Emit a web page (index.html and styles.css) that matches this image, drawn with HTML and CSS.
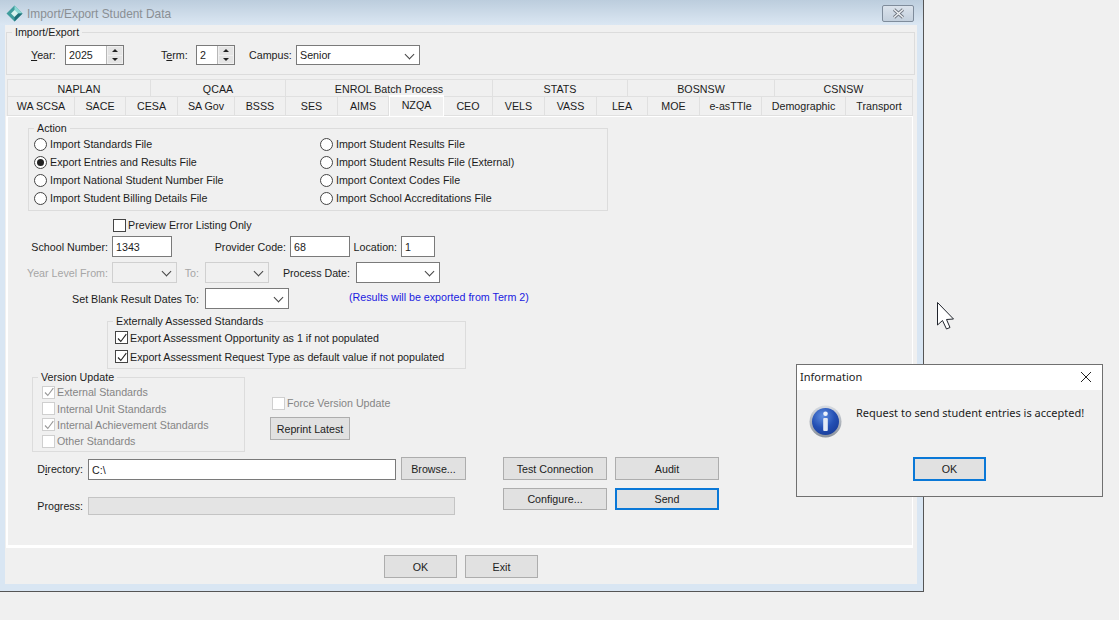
FILE: index.html
```html
<!DOCTYPE html>
<html lang="en">
    <head>
        <meta charset="UTF-8" />
        <title>Import/Export Student Data</title>
        <link rel="stylesheet" href="styles.css">
    </head>
    <body>
        <!-- shared icons -->
        <svg class="defs" width="0" height="0">
            <symbol id="tick" viewBox="0 0 12 12">
                <path d="M2 6.5 L4.8 9.5 L10.3 2.2" fill="none" stroke="currentColor" stroke-width="1.1" />
            </symbol>
            <radialGradient id="infoFill" cx="40%" cy="30%" r="80%">
                <stop offset="0" stop-color="#5f8ee0" />
                <stop offset="0.55" stop-color="#2450b4" />
                <stop offset="1" stop-color="#173a96" />
            </radialGradient>
            <linearGradient id="infoRing" x1="0" y1="0" x2="0" y2="1">
                <stop offset="0" stop-color="#d8dce2" />
                <stop offset="1" stop-color="#8b929c" />
            </linearGradient>
        </svg>

        <!-- main window -->
        <div class="win">
            <div class="titlebar">
                <svg class="appicon" width="17" height="17" viewBox="0 0 17 17">
                    <path d="M8.5 .5 L16.5 8.5 L8.5 16.5 L.5 8.5 Z" fill="#3f9d9d" />
                    <path d="M8.5 .5 L16.5 8.5 L8.5 8.5 Z" fill="#8fd8d4" />
                    <path d="M8.5 8.5 L16.5 8.5 L8.5 16.5 Z" fill="#1f6f78" />
                    <path d="M8.5 5 L12 8.5 L8.5 12 L5 8.5 Z" fill="#d8f2ee" />
                </svg>
                <span class="wintitle">Import/Export Student Data</span>
                <button class="winclose">
                    <svg width="13" height="11" viewBox="0 0 13 11">
                        <path d="M2 1.5 L11 9.5 M11 1.5 L2 9.5" stroke="#6f7680" stroke-width="3.2" />
                        <path d="M2 1.5 L11 9.5 M11 1.5 L2 9.5" stroke="#eef1f4" stroke-width="1.5" />
                    </svg>
                </button>
            </div>

            <div class="client">
                <fieldset class="grp grp-top">
                    <legend>Import/Export</legend>
                    <div class="top-row">
                        <label class="lbl-year"><u>Y</u>ear:</label>
                        <div class="spin spin-year">
                            <span class="spin-val">2025</span>
                            <span class="spin-btns"><i class="up"></i><i class="down"></i></span>
                        </div>
                        <label class="lbl-term">T<u>e</u>rm:</label>
                        <div class="spin spin-term">
                            <span class="spin-val">2</span>
                            <span class="spin-btns"><i class="up"></i><i class="down"></i></span>
                        </div>
                        <label class="lbl-campus">Campus:</label>
                        <div class="combo w-campus">Senior</div>
                    </div>
                </fieldset>

                <!-- tabs -->
                <div class="tabs tabs-top">
                    <div class="tab">NAPLAN</div>
                    <div class="tab">QCAA</div>
                    <div class="tab">ENROL Batch Process</div>
                    <div class="tab">STATS</div>
                    <div class="tab">BOSNSW</div>
                    <div class="tab">CSNSW</div>
                </div>
                <div class="tabs tabs-low">
                    <div class="tab">WA SCSA</div>
                    <div class="tab">SACE</div>
                    <div class="tab">CESA</div>
                    <div class="tab">SA Gov</div>
                    <div class="tab">BSSS</div>
                    <div class="tab">SES</div>
                    <div class="tab">AIMS</div>
                    <div class="tab tab-on">NZQA</div>
                    <div class="tab">CEO</div>
                    <div class="tab">VELS</div>
                    <div class="tab">VASS</div>
                    <div class="tab">LEA</div>
                    <div class="tab">MOE</div>
                    <div class="tab">e-asTTle</div>
                    <div class="tab">Demographic</div>
                    <div class="tab">Transport</div>
                </div>

                <div class="panel">
                    <fieldset class="grp grp-action">
                        <legend>Action</legend>
                        <div class="radios">
                            <div class="opt"><span class="radio"></span>Import Standards File</div>
                            <div class="opt"><span class="radio"></span>Import Student Results File</div>
                            <div class="opt"><span class="radio on"></span>Export Entries and Results File</div>
                            <div class="opt"><span class="radio"></span>Import Student Results File (External)</div>
                            <div class="opt"><span class="radio"></span>Import National Student Number File</div>
                            <div class="opt"><span class="radio"></span>Import Context Codes File</div>
                            <div class="opt"><span class="radio"></span>Import Student Billing Details File</div>
                            <div class="opt"><span class="radio"></span>Import School Accreditations File</div>
                        </div>
                    </fieldset>

                    <div class="opt preview"><span class="check"></span>Preview Error Listing Only</div>

                    <div class="row row-school">
                        <label class="lbl lbl-main">School Number:</label>
                        <div class="edit w-school">1343</div>
                        <label class="lbl lbl-provider">Provider Code:</label>
                        <div class="edit w-school">68</div>
                        <label class="lbl lbl-location">Location:</label>
                        <div class="edit w-location">1</div>
                    </div>
                    <div class="row">
                        <label class="lbl lbl-main off">Year Level From:</label>
                        <div class="combo combo-off w-from"></div>
                        <label class="lbl lbl-to off">To:</label>
                        <div class="combo combo-off w-to"></div>
                        <label class="lbl lbl-process">Process Date:</label>
                        <div class="combo w-date"></div>
                    </div>
                    <div class="row">
                        <label class="lbl lbl-blank">Set Blank Result Dates To:</label>
                        <div class="combo w-date"></div>
                        <span class="note">(Results will be exported from Term 2)</span>
                    </div>

                    <fieldset class="grp grp-ext">
                        <legend>Externally Assessed Standards</legend>
                        <div class="opt opt-ext"><span class="check"><svg width="12" height="12"><use href="#tick" /></svg></span>Export Assessment Opportunity as 1 if not populated</div>
                        <div class="opt opt-ext"><span class="check"><svg width="12" height="12"><use href="#tick" /></svg></span>Export Assessment Request Type as default value if not populated</div>
                    </fieldset>

                    <div class="version-row">
                        <fieldset class="grp grp-version">
                            <legend>Version Update</legend>
                            <div class="opt opt-off"><span class="check"><svg width="12" height="12"><use href="#tick" /></svg></span>External Standards</div>
                            <div class="opt opt-off"><span class="check"></span>Internal Unit Standards</div>
                            <div class="opt opt-off"><span class="check"><svg width="12" height="12"><use href="#tick" /></svg></span>Internal Achievement Standards</div>
                            <div class="opt opt-off"><span class="check"></span>Other Standards</div>
                        </fieldset>
                        <div class="force">
                            <div class="opt opt-off opt-force"><span class="check"></span>Force Version Update</div>
                            <button class="btn btn-reprint">Reprint Latest</button>
                        </div>
                    </div>

                    <div class="lower">
                        <div class="lower-left">
                            <div class="dir-row">
                                <label class="lbl lbl-dir">D<u>i</u>rectory:</label>
                                <div class="edit w-dir">C:\</div>
                                <button class="btn btn-browse">Browse...</button>
                            </div>
                            <div class="progress-row">
                                <label class="lbl lbl-dir">Progress:</label>
                                <div class="progress"></div>
                            </div>
                        </div>
                        <div class="actions">
                            <button class="btn btn-tall">Test Connection</button>
                            <button class="btn btn-tall">Audit</button>
                            <button class="btn">Configure...</button>
                            <button class="btn btn-focus">Send</button>
                        </div>
                    </div>
                </div>

                <div class="footer">
                    <button class="btn btn-foot">OK</button>
                    <button class="btn btn-foot">Exit</button>
                </div>
            </div>
        </div>

        <!-- mouse pointer -->
        <svg class="pointer" width="20" height="30" viewBox="0 0 20 30">
            <path d="M1.5 1.5 L1.5 24 L6.5 19.5 L10.5 28 L14 26.5 L10.5 18.5 L17.5 18 Z" fill="#fff" stroke="#20242c" stroke-width="1" />
        </svg>

        <!-- message box -->
        <div class="dlg">
            <div class="dlg-title">
                <span>Information</span>
                <svg width="12" height="12" viewBox="0 0 12 12">
                    <path d="M1 1 L11 11 M11 1 L1 11" stroke="#222" stroke-width="1" />
                </svg>
            </div>
            <div class="dlg-body">
                <div class="dlg-msg">
                    <svg width="33" height="33" viewBox="0 0 33 33">
                        <circle cx="16.5" cy="16.5" r="16" fill="url(#infoRing)" />
                        <circle cx="16.5" cy="16.5" r="13.5" fill="url(#infoFill)" />
                        <circle cx="16.5" cy="8.8" r="2.3" fill="#eef3fb" />
                        <rect x="14.2" y="13" width="4.6" height="13" rx="1" fill="#e4eaf5" />
                    </svg>
                    <p>Request to send student entries is accepted!</p>
                </div>
                <button class="btn btn-focus btn-dlg">OK</button>
            </div>
        </div>
    </body>
</html>
```

FILE: styles.css
```css
* {
    box-sizing: border-box;
}
html,
body {
    margin: 0;
    height: 100%;
}
body {
    position: relative;
    overflow: hidden;
    background: #f0f0f0;
    color: #1c1c1c;
    font-family: "Liberation Sans", "Noto Sans", sans-serif;
    font-size: 10.7px;
    line-height: 14px;
}
.defs {
    position: absolute;
}
button {
    font: inherit;
    color: inherit;
    padding: 0;
}
p {
    margin: 0;
}

/* main window */
.win {
    position: absolute;
    top: 0;
    left: 0;
    width: 924px;
    height: 592px;
    display: flex;
    flex-direction: column;
    padding: 0 6px 7px 5px;
    background: #d9e6f3;
    border-right: 1px solid #555;
    border-bottom: 1px solid #555;
}
.titlebar {
    flex: none;
    height: 25px;
    margin: 0 -6px 0 -5px;
    display: flex;
    align-items: center;
    padding: 2px 9px 0 6px;
    background: linear-gradient(to bottom, #bccddd, #dbe7f3);
}
.appicon {
    margin-right: 4px;
}
.wintitle {
    flex: 1;
    color: #8a8f94;
    font-size: 11.9px;
}
.winclose {
    width: 32px;
    height: 17px;
    display: flex;
    align-items: center;
    justify-content: center;
    background: linear-gradient(to bottom, #dbe3ec, #c4d0dd);
    border: 1px solid #7f8c9b;
    border-radius: 2px;
}
.client {
    flex: 1;
    min-height: 0;
    display: flex;
    flex-direction: column;
    padding: 0 1px;
    background: #f0f0f0;
}

/* group boxes */
.grp {
    margin: 0;
    padding: 0;
    min-width: 0;
    border: 1px solid #dcdcdc;
}
.grp legend {
    padding: 0 3px;
    margin-left: 5px;
    line-height: 14px;
}
.grp-top {
    width: 909px;
    height: 50px;
}
.top-row {
    display: flex;
    align-items: center;
    height: 20px;
    margin-top: 6px;
}
.lbl-year {
    margin-left: 24px;
    width: 34px;
}
.lbl-term {
    margin-left: 37px;
    width: 35px;
}
.lbl-campus {
    margin-left: 14px;
    width: 47px;
}

/* inputs */
.edit,
.combo,
.spin {
    height: 21px;
    display: flex;
    align-items: center;
    padding-left: 3px;
    background: #fff;
    border: 1px solid #7a7a7a;
}
.top-row .spin,
.top-row .combo {
    height: 20px;
}
.spin-year {
    width: 59px;
}
.spin-term {
    width: 39px;
}
.spin-val {
    flex: 1;
}
.spin-btns {
    width: 17px;
    height: 100%;
    display: flex;
    flex-direction: column;
    padding: 1px;
    background: #f0f0f0;
    border-left: 1px solid #b8b8b8;
}
.spin-btns i {
    flex: 1;
    display: flex;
    align-items: center;
    justify-content: center;
    background: #e4e4e4;
}
.spin-btns i::after {
    content: "";
    border-left: 3px solid transparent;
    border-right: 3px solid transparent;
}
.spin-btns .up {
    margin-bottom: 1px;
}
.spin-btns .up::after {
    border-bottom: 3px solid #222;
}
.spin-btns .down::after {
    border-top: 3px solid #222;
}
.combo {
    position: relative;
}
.combo::after {
    content: "";
    position: absolute;
    right: 6px;
    top: 5px;
    width: 6px;
    height: 6px;
    border-right: 1px solid #444;
    border-bottom: 1px solid #444;
    transform: rotate(45deg);
}
.combo-off {
    background: #f0f0f0;
    border-color: #d0d0d0;
}
.w-campus {
    width: 124px;
}
.w-from {
    width: 65px;
}
.w-to {
    width: 64px;
}
.w-date {
    width: 84px;
}
.w-school {
    width: 60px;
}
.w-location {
    width: 34px;
}
.w-dir {
    width: 308px;
    margin-top: 2px;
}

/* tabs */
.tabs {
    display: grid;
    margin-left: 1px;
    width: 906px;
    text-align: center;
}
.tabs-top {
    margin-top: 4px;
    height: 18px;
    grid-template-columns: 144px 135px 207px 135px 147px 138px;
}
.tabs-low {
    height: 18px;
    margin-bottom: 1px;
    grid-template-columns: 68px 51px 52px 57px 51px 52px 51px 55px 49px 52px 52px 51px 52px 62px 84px 67px;
}
.tab {
    display: flex;
    align-items: center;
    justify-content: center;
    padding-top: 1px;
    border: 1px solid #e0e0e0;
    border-left-width: 0;
}
.tab:first-child {
    border-left-width: 1px;
}
.tabs-low .tab {
    padding-top: 0;
    border-top-width: 0;
}
.tabs-low .tab-on {
    position: relative;
    height: 21px;
    margin-top: -2px;
    padding: 0 0 3px;
    background: #f0f0f0;
    border: 1px solid #fff;
    border-top-width: 2px;
    border-bottom: 0;
}

/* tab page */
.panel {
    flex: 1;
    min-height: 0;
    width: 907px;
    border: 1px solid #fff;
    border-left-width: 2px;
    border-bottom-width: 3px;
}
.grp-action {
    width: 580px;
    height: 90px;
    margin: 4px 0 0 20px;
}
.radios {
    display: grid;
    grid-template-columns: 286px 1fr;
    grid-auto-rows: 18px;
    padding-left: 5px;
}
.opt {
    display: flex;
    align-items: center;
    gap: 3px;
}
.radio {
    width: 13px;
    height: 13px;
    display: flex;
    align-items: center;
    justify-content: center;
    background: #fff;
    border: 1px solid #444;
    border-radius: 50%;
}
.radio.on::after {
    content: "";
    width: 7px;
    height: 7px;
    background: #222;
    border-radius: 50%;
}
.check {
    flex: none;
    width: 13px;
    height: 13px;
    display: flex;
    color: #222;
    background: #fff;
    border: 1px solid #444;
}
.check svg {
    margin: -0.5px;
}
.preview {
    height: 14px;
    margin: 7px 0 0 105px;
    gap: 2px;
}

/* form rows */
.row {
    display: flex;
    align-items: center;
    height: 21px;
    margin-top: 5px;
}
.row-school {
    margin-top: 4px;
}
.lbl {
    flex: none;
    text-align: right;
    margin-right: 4px;
}
.lbl-main {
    width: 100px;
}
.lbl-provider {
    width: 114px;
}
.lbl-location {
    width: 47px;
}
.lbl-to {
    width: 22px;
    margin-right: 6px;
}
.lbl-process {
    width: 81px;
    margin-right: 6px;
}
.lbl-blank {
    width: 191px;
    margin-right: 6px;
}
.off {
    color: #a6a6a6;
}
.note {
    margin: 0 0 3px 60px;
    color: #1a1ae0;
}
.grp-ext {
    width: 359px;
    height: 55px;
    margin: 5px 0 0 99px;
}
.opt-ext {
    height: 19px;
    margin-left: 7px;
    gap: 2px;
}
.version-row {
    display: flex;
    margin: 1px 0 0 24px;
}
.grp-version {
    width: 213px;
    height: 82px;
}
.opt-off {
    height: 16.4px;
    margin-left: 9px;
    gap: 2px;
    color: #858585;
}
.opt-off .check {
    color: #999;
    border-color: #cfcfcf;
}
.force {
    margin-left: 25px;
    padding-top: 26px;
}
.opt-force {
    height: 14px;
    margin-left: 2px;
}
.btn-reprint {
    display: block;
    width: 80px;
    height: 23px;
    margin-top: 7px;
}

/* bottom part */
.lower {
    display: flex;
    margin-top: 5px;
}
.lower-left {
    width: 458px;
}
.dir-row {
    display: flex;
    height: 23px;
}
.lbl-dir {
    width: 75px;
    margin-right: 5px;
    align-self: center;
}
.btn-browse {
    width: 65px;
    margin-left: 5px;
}
.progress-row {
    display: flex;
    margin-top: 17px;
}
.progress {
    width: 367px;
    height: 18px;
    background: #e4e4e4;
    border: 1px solid #c4c4c4;
}
.actions {
    margin-left: 37px;
    display: grid;
    grid-template-columns: 104px 104px;
    grid-template-rows: 23px 22px;
    gap: 8px;
}
.btn {
    background: #e1e1e1;
    border: 1px solid #adadad;
}
.btn-focus {
    border: 2px solid #0a78d7;
}
.footer {
    flex: none;
    height: 36px;
    display: flex;
    justify-content: center;
    gap: 8px;
    padding-top: 7px;
}
.btn-foot {
    width: 73px;
    height: 23px;
}

/* pointer */
.pointer {
    position: absolute;
    left: 936px;
    top: 301px;
}

/* message box */
.dlg {
    position: absolute;
    left: 796px;
    top: 364px;
    width: 307px;
    height: 133px;
    display: flex;
    flex-direction: column;
    background: #f0f0f0;
    border: 1px solid #707070;
}
.dlg-title {
    flex: none;
    height: 25px;
    display: flex;
    align-items: center;
    justify-content: space-between;
    padding: 0 10px 1px 3px;
    background: #fff;
    font-family: "Noto Sans", sans-serif;
    font-size: 11px;
}
.dlg-body {
    flex: 1;
    display: flex;
    flex-direction: column;
}
.dlg-msg {
    display: flex;
    gap: 14px;
    padding: 15px 0 0 12px;
    height: 67px;
    font-family: "Noto Sans", sans-serif;
    font-size: 11px;
}
.dlg-msg p {
    margin-top: 1px;
}
.btn-dlg {
    width: 73px;
    height: 24px;
    margin-left: 116px;
}
```
